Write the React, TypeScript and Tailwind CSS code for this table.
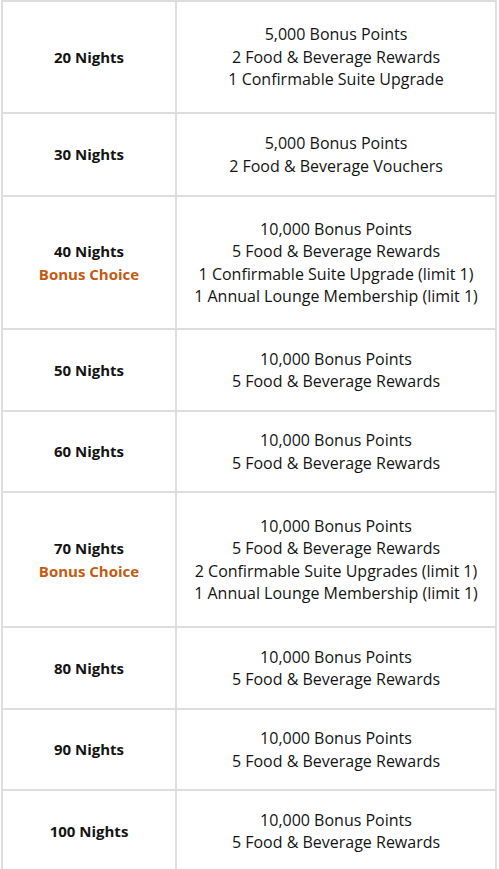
import React from "react";

type Row = { nights: string; bonus?: boolean; rewards: string[]; h: string };

const rows: Row[] = [
  { nights: "20 Nights", rewards: ["5,000 Bonus Points", "2 Food & Beverage Rewards", "1 Confirmable Suite Upgrade"], h: "h-[112px]" },
  { nights: "30 Nights", rewards: ["5,000 Bonus Points", "2 Food & Beverage Vouchers"], h: "h-[83px]" },
  { nights: "40 Nights", bonus: true, rewards: ["10,000 Bonus Points", "5 Food & Beverage Rewards", "1 Confirmable Suite Upgrade (limit 1)", "1 Annual Lounge Membership (limit 1)"], h: "h-[133px]" },
  { nights: "50 Nights", rewards: ["10,000 Bonus Points", "5 Food & Beverage Rewards"], h: "h-[82px]" },
  { nights: "60 Nights", rewards: ["10,000 Bonus Points", "5 Food & Beverage Rewards"], h: "h-[81px]" },
  { nights: "70 Nights", bonus: true, rewards: ["10,000 Bonus Points", "5 Food & Beverage Rewards", "2 Confirmable Suite Upgrades (limit 1)", "1 Annual Lounge Membership (limit 1)"], h: "h-[135px]" },
  { nights: "80 Nights", rewards: ["10,000 Bonus Points", "5 Food & Beverage Rewards"], h: "h-[82px]" },
  { nights: "90 Nights", rewards: ["10,000 Bonus Points", "5 Food & Beverage Rewards"], h: "h-[81px]" },
  { nights: "100 Nights", rewards: ["10,000 Bonus Points", "5 Food & Beverage Rewards"], h: "h-[82px]" },
];

export default function App() {
  return (
    <div className="w-[499px] h-[869px] overflow-hidden bg-white pl-[1px] pr-[2px]" style={{ fontFamily: '"Open Sans", "Liberation Sans", sans-serif' }}>
      <table className="w-full border-collapse leading-[22.5px] text-[#141414]">
        <tbody>
          {rows.map((r) => (
            <tr key={r.nights} className={r.h}>
              <td className="w-[174px] border-2 border-[#dedede] text-center align-middle font-bold text-[15px]">
                <div>{r.nights}</div>
                {r.bonus && <div className="text-[#c55a11]">Bonus Choice</div>}
              </td>
              <td className="border-2 border-[#dedede] text-center align-middle text-[16px]">
                {r.rewards.map((t) => (
                  <div key={t}>{t}</div>
                ))}
              </td>
            </tr>
          ))}
        </tbody>
      </table>
    </div>
  );
}
